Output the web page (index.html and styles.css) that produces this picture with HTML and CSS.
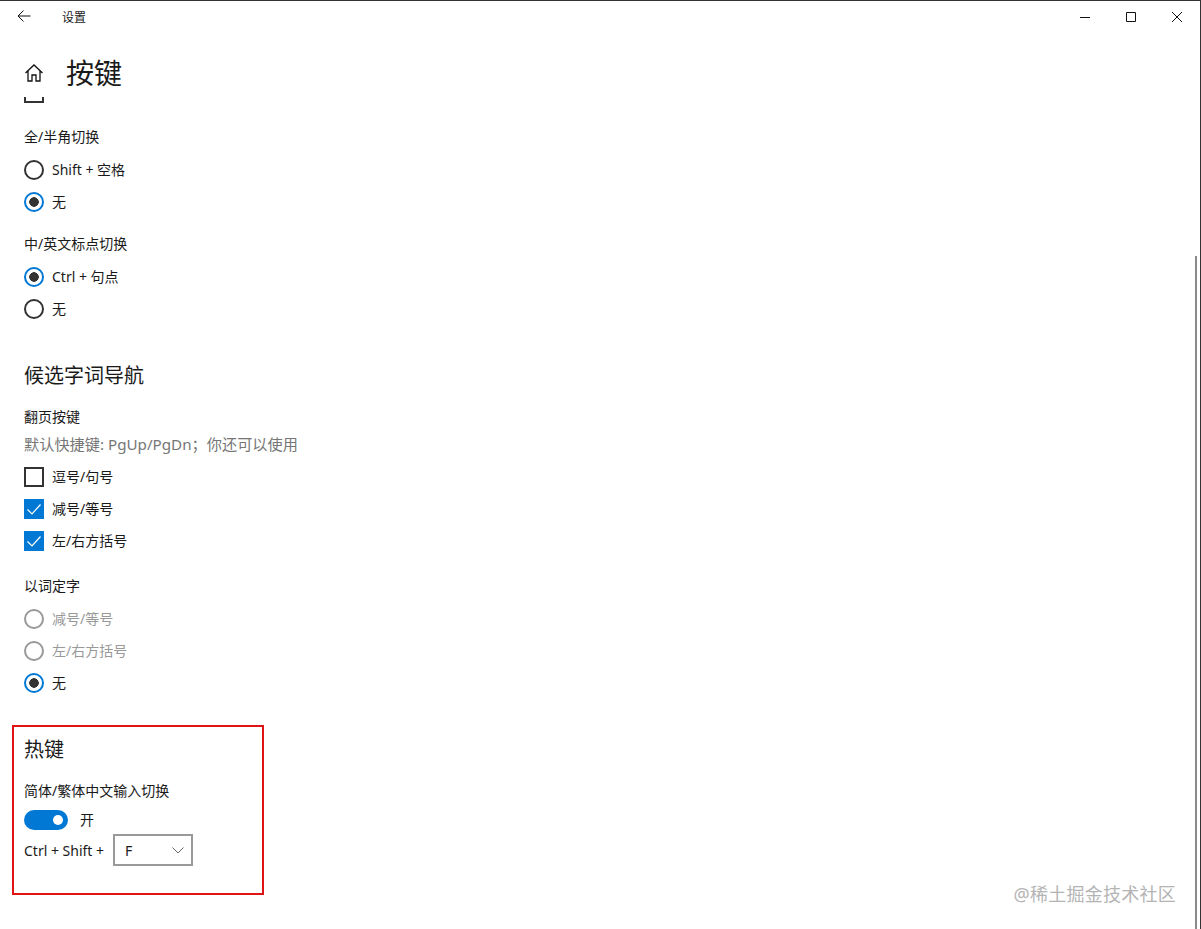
FILE: index.html
```html
<!DOCTYPE html>
<html lang="zh-CN">
<head>
    <meta charset="UTF-8">
    <meta name="viewport" content="width=device-width, initial-scale=1.0">
    <title>设置</title>
    <link rel="stylesheet" href="styles.css">
</head>
<body>
    <div class="window">
        <div class="titlebar">
            <svg class="back-icon" width="14" height="14" viewBox="0 0 14 14"><path d="M13.5 7H1M6.5 1.5 1 7l5.5 5.5"/></svg>
            <span class="app-name">设置</span>
            <div class="window-buttons">
                <svg width="12" height="12" viewBox="0 0 12 12"><path d="M1 6.5h10"/></svg>
                <svg width="12" height="12" viewBox="0 0 12 12"><path d="M1.5 1.5h9v9h-9z"/></svg>
                <svg width="12" height="12" viewBox="0 0 12 12"><path d="M1 1l10 10M11 1 1 11"/></svg>
            </div>
        </div>

        <div class="page-header">
            <svg class="home-icon" width="20" height="20" viewBox="0 0 20 20"><path d="M1.5 10 10 2l8.500 8M4 8v10h4v-6h4v6h4V8"/></svg>
            <h1>按键</h1>
        </div>
        <div class="clipped-box"></div>

        <div class="content">
            <div class="label first">全/半角切换</div>
            <div class="option"><span class="radio"></span>Shift + 空格</div>
            <div class="option"><span class="radio on"></span>无</div>

            <div class="label gap">中/英文标点切换</div>
            <div class="option"><span class="radio on"></span>Ctrl + 句点</div>
            <div class="option"><span class="radio"></span>无</div>

            <h2 class="section-title">候选字词导航</h2>
            <div class="label">翻页按键</div>
            <div class="desc">默认快捷键: PgUp/PgDn；你还可以使用</div>
            <div class="option"><span class="checkbox"></span>逗号/句号</div>
            <div class="option">
                <span class="checkbox on"><svg width="20" height="20" viewBox="0 0 20 20"><path d="M3.500 10.500 8 15l8.500-9.500"/></svg></span>减号/等号
            </div>
            <div class="option">
                <span class="checkbox on"><svg width="20" height="20" viewBox="0 0 20 20"><path d="M3.500 10.500 8 15l8.500-9.500"/></svg></span>左/右方括号
            </div>

            <div class="label gap-lg">以词定字</div>
            <div class="option disabled"><span class="radio"></span>减号/等号</div>
            <div class="option disabled"><span class="radio"></span>左/右方括号</div>
            <div class="option"><span class="radio on"></span>无</div>

            <div class="hotkey-box">
                <h2>热键</h2>
                <div class="label">简体/繁体中文输入切换</div>
                <div class="toggle-row"><span class="toggle"></span>开</div>
                <div class="combo-row">
                    Ctrl + Shift +
                    <div class="select">F<svg width="12" height="7" viewBox="0 0 12 7"><path d="M.5.5 6 6 11.500.5"/></svg></div>
                </div>
            </div>
        </div>

        <div class="scrollbar"></div>
    </div>
    <div class="watermark">@稀土掘金技术社区</div>
</body>
</html>
```

FILE: styles.css
```css
* {
    box-sizing: border-box;
}
body {
    margin: 0;
    height: 929px;
    overflow: hidden;
    background: white;
    color: #1a1a1a;
    font-family: "Noto Sans", "Noto Sans CJK SC", sans-serif;
    font-size: 14px;
}
svg {
    fill: none;
    stroke: #111;
    stroke-width: 1;
}
.window {
    position: relative;
    height: 929px;
    border-top: 1px solid #333;
    border-right: 1px solid #333;
}
.titlebar {
    display: flex;
    align-items: center;
    height: 32px;
    padding-left: 17px;
}
.back-icon {
    margin-top: -2px;
}
.app-name {
    margin-left: 31px;
    font-size: 12px;
}
.window-buttons {
    display: flex;
    gap: 34px;
    margin-left: auto;
    margin-right: 17px;
}
.page-header {
    display: flex;
    align-items: center;
    height: 48px;
    margin-top: 16px;
    padding-left: 24px;
}
.home-icon {
    stroke-width: 1.3;
}
h1 {
    margin: 0 0 0 22px;
    font-size: 28px;
    font-weight: 400;
    line-height: 48px;
}
.clipped-box {
    width: 20px;
    height: 6px;
    margin: 0 0 0 24px;
    border: 2px solid #333;
    border-top: none;
}
.content {
    padding-left: 24px;
}
.label {
    height: 20px;
    font-size: 14px;
    line-height: 19px;
}
.first {
    margin-top: 24px;
    margin-bottom: 7px;
}
.gap {
    margin-top: 16px;
    margin-bottom: 7px;
}
.gap-lg {
    margin-top: 19px;
    margin-bottom: 7px;
}
.option {
    display: flex;
    align-items: center;
    gap: 8px;
    height: 32px;
    line-height: 30px;
}
.disabled {
    color: #999;
}
.radio {
    width: 20px;
    height: 20px;
    border: 2px solid #333;
    border-radius: 50%;
}
.disabled .radio {
    border-color: #999;
}
.radio.on {
    border-color: #0078d4;
    background: radial-gradient(circle, #333 4.5px, white 5px);
}
.checkbox {
    width: 20px;
    height: 20px;
    border: 2px solid #333;
}
.checkbox.on {
    border: none;
    background: #0078d4;
}
.checkbox svg {
    display: block;
    stroke: white;
    stroke-width: 1.2;
}
.section-title {
    margin: 37px 0 17px;
    font-size: 20px;
    font-weight: 400;
    line-height: 28px;
}
.desc {
    height: 20px;
    margin-top: 7px;
    margin-bottom: 7px;
    color: #767676;
    font-size: 15.2px;
    line-height: 20px;
}
.hotkey-box {
    width: 252px;
    height: 170px;
    margin: 26px 0 0 -12px;
    padding: 8px 10px 0;
    border: 2px solid #e01414;
}
.hotkey-box h2 {
    margin: 0 0 18px;
    font-size: 20px;
    font-weight: 400;
    line-height: 30px;
}
.hotkey-box .label {
    margin-top: -2px;
}
.toggle-row {
    display: flex;
    align-items: center;
    gap: 12px;
    height: 20px;
    margin-top: 9px;
    line-height: 20px;
}
.toggle {
    position: relative;
    width: 44px;
    height: 20px;
    border-radius: 10px;
    background: #0078d4;
}
.toggle::after {
    content: "";
    position: absolute;
    top: 5px;
    right: 5px;
    width: 10px;
    height: 10px;
    border-radius: 50%;
    background: white;
}
.combo-row {
    display: flex;
    align-items: center;
    gap: 9px;
    margin-top: 4px;
}
.select {
    display: flex;
    align-items: center;
    justify-content: space-between;
    width: 80px;
    height: 32px;
    padding: 0 7px 0 10px;
    border: 2px solid #999;
}
.select svg {
    stroke: #666;
}
.scrollbar {
    position: absolute;
    top: 255px;
    right: 3px;
    bottom: 0;
    width: 2px;
    background: #8a8a8a;
}
.watermark {
    position: absolute;
    top: 881px;
    right: 25px;
    color: #b4b4b4;
    font-size: 18px;
    letter-spacing: 0.25px;
    line-height: 26px;
}
```
